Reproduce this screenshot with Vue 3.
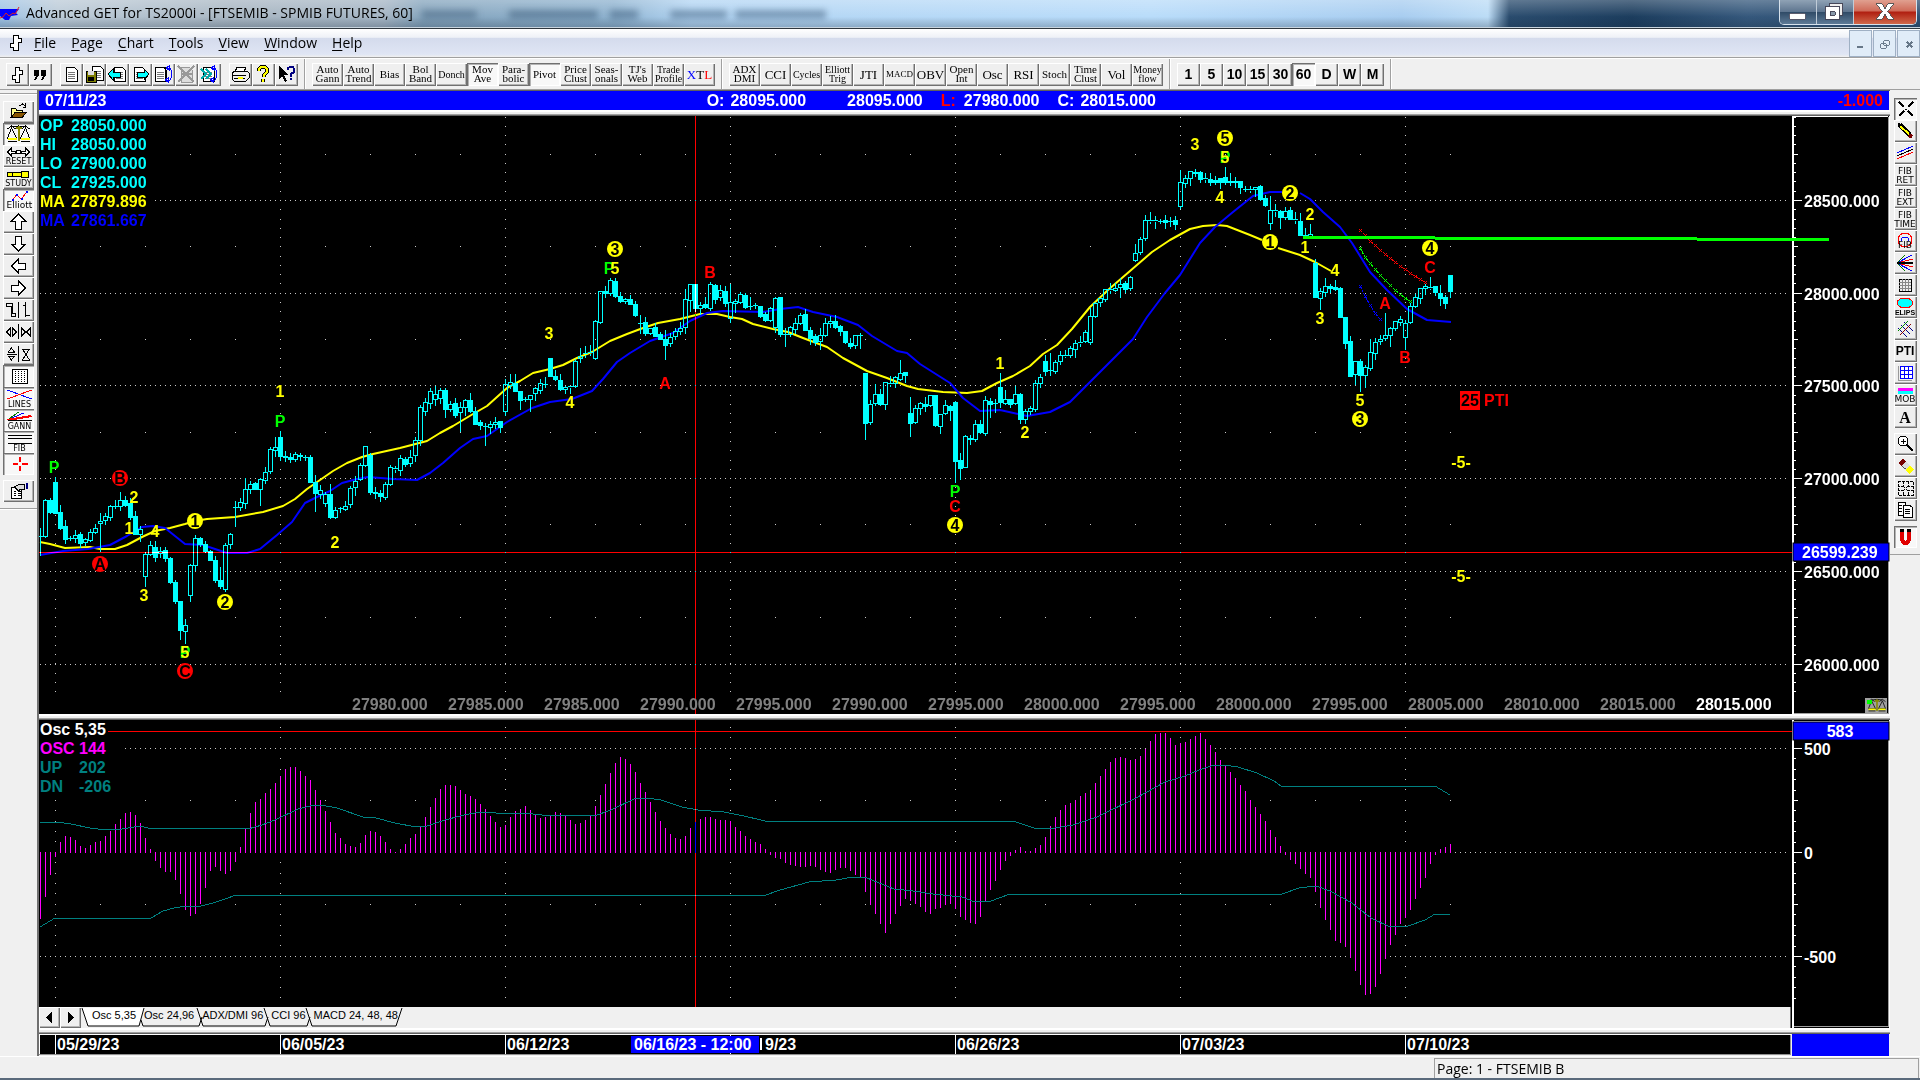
<script setup>
const menus = ['File', 'Page', 'Chart', 'Tools', 'View', 'Window', 'Help']

const barGlyph = '<path d="M9 4h4v3h3v4h-3v8H9v-3H6v-4h3z" fill="#fff" stroke="#000"/>'
const page = (x, y) => `<path d="M${x} ${y}h8l3 3v11h-11z" fill="#fff" stroke="#000"/><path d="M${x + 2} ${y + 5}h7M${x + 2} ${y + 7}h7M${x + 2} ${y + 9}h7M${x + 2} ${y + 11}h7" stroke="#777"/>`
const tools = [
  [
    { t: 'Bar chart', s: barGlyph },
    { t: 'Quotes', s: '<path d="M5 7h5v5l-3 5H5l2-4H5zM12 7h5v5l-3 5h-2l2-4h-2z" fill="#000"/>' }
  ],
  [
    { t: 'New page', s: page(6, 4) },
    { t: 'Save page', s: page(9, 3) + '<path d="M3 8h10v11H3z" fill="#7f7f00" stroke="#000"/><path d="M5 8h6v4H5z" fill="#ddd"/><path d="M5 14h6v4H5z" fill="#000"/>' },
    { t: 'Previous page', s: page(8, 4) + '<path d="M2 11l5-5v3h7v5H7v3z" fill="#0ff" stroke="#000"/>' },
    { t: 'Next page', s: page(5, 4) + '<path d="M20 11l-5-5v3H8v5h7v3z" fill="#0ff" stroke="#000"/>' },
    { t: 'Cycle pages', s: page(3, 4) + '<path d="M6 4h7v14H6" fill="none" stroke="#000"/><path d="M15 5h3l1 2v8l-1 2h-3M13 17l3-2v4zM14 5l3-2v4z" fill="none" stroke="#00f"/>' },
    { t: 'Delete page', s: '<path d="M6 4h8l3 3v12H6z" fill="#ddd" stroke="#999"/><path d="M3 3l16 16M19 3L3 19M6 11h11" stroke="#999" stroke-width="2"/>' },
    { t: 'Link pages', s: page(5, 4) + '<path d="M3 6l5 5-5 5M8 6l5 5-5 5" fill="none" stroke="#0aa" stroke-width="2"/><path d="M14 5h3l1 2v8l-1 2h-3M12 17l3-2v4zM13 5l3-2v4z" fill="none" stroke="#00f"/>' }
  ],
  [
    { t: 'Print', s: '<path d="M8 4h9l-2 5H6z" fill="#fff" stroke="#000"/><path d="M3 10l3-2h12l2 2v5l-3 3H5l-2-2z" fill="#eee" stroke="#000"/><path d="M4 12h13M5 15h11" stroke="#000"/><path d="M9 15h5" stroke="#ff0" stroke-width="2"/>' },
    { t: 'Help', s: '<path d="M7 8V6l2-2h4l2 2v3l-3 3v2M11 16v3" fill="none" stroke="#000" stroke-width="4"/><path d="M7 8V6l2-2h4l2 2v3l-3 3v2M11 16v3" fill="none" stroke="#ff0" stroke-width="2"/>' },
    { t: 'Context help', s: '<path d="M4 3v13l3-3 3 6 2-1-3-6h4z" fill="#000"/><path d="M13 7V5l2-1h3l1 2v3l-3 2v3M16 15v2" fill="none" stroke="#000080" stroke-width="2"/>' }
  ]
]
const studiesA = [
  ['Auto', 'Gann'], ['Auto', 'Trend'], ['Bias'], ['Bol', 'Band'], ['Donch'], ['Mov', 'Ave'], ['Para-', 'bolic'],
  ['Pivot'], ['Price', 'Clust'], ['Seas-', 'onals'], ["TJ's", 'Web'], ['Trade', 'Profile'], ['XTL']
]
const studiesB = [
  ['ADX', 'DMI'], ['CCI'], ['Cycles'], ['Elliott', 'Trig'], ['JTI'], ['MACD'], ['OBV'], ['Open', 'Int'],
  ['Osc'], ['RSI'], ['Stoch'], ['Time', 'Clust'], ['Vol'], ['Money', 'flow']
]
const small = ['Donch', 'Cycles', 'Trade', 'Elliott', 'Money']
const mini = ['MACD']
const big = ['CCI', 'JTI', 'OBV', 'RSI', 'Osc', 'Vol', 'XTL']
const frames = ['1', '5', '10', '15', '30', '60', 'D', 'W', 'M']
const sizeOf = w => ({ small: small.includes(w), mini: mini.includes(w), big: big.includes(w) })

const lab = (s, y = 19, x = 15) => `<text x="${x}" y="${y}" text-anchor="middle" class="cap">${s}</text>`
const scales = '<path d="M4 6l4-3 4 3M18 6l4-3 4 3M8 4l7-1 7 1" fill="none" stroke="#000"/><path d="M15 3v15M12 5h6" stroke="#880" stroke-width="2"/><path d="M8 5l-4 10h9zM22 5l-5 10h9z" fill="none" stroke="#000"/><path d="M4 16h9M17 16h9" stroke="#ff0" stroke-width="2"/><path d="M4 18h9M17 18h9" stroke="#000"/>'
const leftTools = [
  { t: 'Open', s: '<path d="M8 15V7h4l1 2h6v3" fill="#ff8" stroke="#000"/><path d="M8 16l4-5h11l-4 5z" fill="#850" stroke="#000"/><path d="M16 5l3-2 3 2M22 2v4h-3" fill="none" stroke="#000"/>' },
  { t: 'Scales', on: 1, s: scales },
  { t: 'Reset', s: '<path d="M4 7l4-4v3h4v2H8v3zM26 7l-4-4v3h-4v2h4v3z" fill="#fff" stroke="#000"/><circle cx="15" cy="7" r="2" fill="#fff" stroke="#000"/>' + lab('RESET') },
  { t: 'Study', s: '<path d="M4 5h5v4H4zM9 5h9v4H9zM18 4h7v6h-7z" fill="#ff0" stroke="#000"/>' + lab('STUDY', 19) },
  { t: 'Elliott waves', on: 1, s: '<path d="M9 11l4-5 5 4 5-7" fill="none" stroke="#f00"/><path d="M8 10h2v2H8zM12 5h2v2h-2zM17 9h2v2h-2zM22 2h2v2h-2z" fill="#00f"/><text x="16" y="19" text-anchor="middle" class="cap wide">Elliott</text>' },
  { t: 'Up', s: '<path d="M15 3l7 7h-4v8h-6v-8H8z" fill="#fff" stroke="#000"/>' },
  { t: 'Down', s: '<path d="M15 18l7-7h-4V3h-6v8H8z" fill="#fff" stroke="#000"/>' },
  { t: 'Left', s: '<path d="M8 11l7-7v4h7v6h-7v4z" fill="#fff" stroke="#000"/>' },
  { t: 'Right', s: '<path d="M22 11l-7-7v4H8v6h7v4z" fill="#fff" stroke="#000"/>' },
  { t: 'Bar width', s: '<path d="M3 4h6v10h3v3H8V7H3zM15 3v16M19 6h3M22 3v15M22 16h4" fill="none" stroke="#000"/>' },
  { t: 'Horizontal zoom', s: '<path d="M7 7l-4 4 4 4zM9 7l4 4-4 4zM15 3v15M18 7l4 4-4 4zM27 7l-4 4 4 4z" fill="none" stroke="#000"/>' },
  { t: 'Vertical zoom', s: '<path d="M5 9l3-4 3 4zM5 13l3 4 3-4zM3 11h10M15 3v16M19 6h7l-7 11h7l-7-11" fill="none" stroke="#000"/>' },
  { t: 'Grid', on: 1, s: '<path d="M9 4h15v14H9z" fill="#fff" stroke="#000"/><path d="M11 6h12M11 8h12M11 10h12M11 12h12M11 14h12M11 16h12" stroke="#000" stroke-dasharray="1 2"/>' },
  { t: 'Lines', on: 1, s: '<path d="M4 3l24 9" stroke="#00f"/><path d="M4 12l24-9" stroke="#f00"/>' + lab('LINES', 20, 16) },
  { t: 'Gann', on: 1, s: '<path d="M4 11l11-8" stroke="#070"/><path d="M4 11l16-7" stroke="#00f"/><path d="M4 11l24-4" stroke="#f00" stroke-width="2"/><path d="M4 11h24" stroke="#000"/>' + lab('GANN', 20, 16) },
  { t: 'Fibonacci', on: 1, s: '<path d="M4 4h24M4 7h24M4 12h24" stroke="#000"/>' + lab('FIB', 20, 16) },
  { t: 'Crosshair', on: 1, s: '<path d="M9 11h5M18 11h6M16 4v5M16 13v5" stroke="#f00" stroke-width="2"/>' }
]
const propTool = '<path d="M8 7h10v11H8z" fill="#fff" stroke="#000"/><path d="M10 11h2M14 11h3M10 13h2M14 13h3M10 15h2M14 15h3" stroke="#000"/><path d="M11 7l5-3h5v5h-4l-2 2z" fill="#ddd" stroke="#000"/><path d="M23 3v6" stroke="#000080" stroke-width="2"/>'

const px = (s, x, y) => `<text x="${x}" y="${y}" text-anchor="middle" class="cap tall">${s}</text>`
const rightTools = [
  [
    { t: 'Cursor', on: 1, s: '<path d="M5 4l5 5M19 4l-5 5M5 18l5-5M19 18l-5-5" stroke="#000" stroke-width="2"/><path d="M11 11h2" stroke="#000"/>' },
    { t: 'Pencil', s: '<path d="M6 5l10 10" stroke="#000" stroke-width="5"/><path d="M6 6l9 8" stroke="#ff0" stroke-width="2"/><path d="M4 3l4 1-3 4z"/><path d="M15 15l3 2" stroke="#700" stroke-width="4"/>' },
    { t: 'Parallel lines', s: '<path d="M3 11l16-7" stroke="#00f"/><path d="M3 14l16-7" stroke="#000"/><path d="M3 17l16-7" stroke="#f00"/>' },
    { t: 'Fib retracement', s: px('FIB', 11, 10) + px('RET', 11, 19) },
    { t: 'Fib extension', s: px('FIB', 11, 10) + px('EXT', 11, 19) },
    { t: 'Fib time', s: px('FIB', 11, 10) + px('TIME', 11, 19) },
    { t: 'Fib circles', s: '<circle cx="11" cy="10" r="7" fill="none" stroke="#f00"/><path d="M7 11a4 4 0 0 1 8 0" fill="none" stroke="#00f"/>' + px('FIB', 11, 18) },
    { t: 'Gann fan', s: '<path d="M3 11l8-8M3 11l8 8" stroke="#070"/><path d="M3 11l15-8M3 11l15 8" stroke="#00f"/><path d="M3 11l16-4M3 11l16 4" stroke="#f00"/><path d="M3 11h16" stroke="#000" stroke-width="2"/>' },
    { t: 'Gann box', s: '<path d="M5 5h12v12H5z" fill="none" stroke="#000"/><path d="M8 5v12M11 5v12M14 5v12M5 8h12M5 11h12M5 14h12" stroke="#888"/>' },
    { t: 'Ellipse', s: '<ellipse cx="11" cy="7" rx="8" ry="5" fill="#0ff" stroke="#f00"/><text x="11" y="19" text-anchor="middle" class="cap tiny">ELIPS</text>' },
    { t: 'Pitchfork', s: '<path d="M4 10l9 9M7 7l9 9M10 4l9 9" stroke="#008"/><path d="M4 13L14 3" stroke="#080"/><path d="M6 17L17 6" stroke="#800"/>' },
    { t: 'PTI', s: '<text x="11" y="15" text-anchor="middle" class="cap pti">PTI</text>' },
    { t: 'Blue grid', s: '<path d="M6 4h12v12H6zM10 4v12M14 4v12M6 8h12M6 12h12" fill="#fff" stroke="#00f"/><path d="M4 4v14M4 18h14" fill="none" stroke="#999"/>' },
    { t: 'Make or break', s: '<path d="M4 5h15" stroke="#f0f" stroke-width="3"/><path d="M4 8h15" stroke="#0ff" stroke-width="3"/>' + px('MOB', 11, 18) },
    { t: 'Text', s: '<text x="11" y="17" text-anchor="middle" class="cap serif">A</text>' }
  ],
  [
    { t: 'Zoom', s: '<circle cx="9" cy="8" r="5" fill="#fff" stroke="#000"/><path d="M7 8h5M9 6v5" stroke="#000"/><path d="M13 12l6 6" stroke="#000" stroke-width="2"/>' },
    { t: 'Erase', s: '<path d="M7 6l4 4" stroke="#700" stroke-width="7"/><path d="M10 9l4 4" stroke="#ddd" stroke-width="7"/><path d="M11 13l3 3M8 11l3 3" stroke="#555"/><path d="M14 13l4 4" stroke="#ff0" stroke-width="6"/>' },
    { t: 'Tile', s: '<path d="M4 4h15v14H4zM9 4v5H4M14 4v5h5M9 18v-5H4M14 18v-5h5M9 9l5 5M14 9l-5 5" fill="none" stroke="#000" stroke-dasharray="3 1"/>' },
    { t: 'Copy', s: '<path d="M4 3h7v13H4z" fill="#fff" stroke="#000"/><path d="M9 6h6l3 2v10H9z" fill="#fff" stroke="#000"/><path d="M5 6h3M5 9h3M5 12h3M11 10h5M11 12h5M11 14h5" stroke="#000"/>' }
  ],
  [{ t: 'Magnet', on: 1, s: '<path d="M8 5v9l2 3h3l2-3V5" fill="none" stroke="#e00000" stroke-width="4"/><path d="M6 4h4M13 4h4" stroke="#000" stroke-width="3"/>' }]
]

const X0 = 40
const STEP = 5
// high, body top, body bottom, low, filled
const candles = [
  [528,536,536,555],[499,500,536,537],[498,500,512,513,1],[477,482,513,513,1],[505,512,528,529,1],[520,526,539,543,1],[536,538,538,540],[530,535,538,542],[532,534,543,547,1],[538,539,542,545],
  [529,532,540,541],[524,528,532,533],[513,521,523,551],[513,516,520,524],[505,506,517,520],[500,506,506,508],[492,500,506,510],[496,500,505,506,1],[498,503,517,519,1],[511,516,534,534,1],
  [526,529,534,541],[552,554,576,586],[541,545,554,555],[541,547,557,561,1],[547,551,553,557],[547,550,558,561,1],[557,558,582,583,1],[580,582,601,603,1],[601,601,630,639,1],[619,625,631,643],
  [564,565,595,601],[535,538,565,570],[537,538,544,546,1],[541,544,551,552,1],[550,551,560,560,1],[556,560,580,582,1],[567,580,586,588,1],[543,545,589,591],[533,534,544,548],[501,507,507,526],
  [498,502,507,510],[478,489,503,508],[481,484,489,493],[482,483,489,489,1],[478,479,489,505],[467,472,480,483],[447,449,471,473],[437,447,450,456],[431,437,456,460,1],[451,456,457,461,1],
  [453,457,459,462,1],[452,454,459,461],[453,455,456,460,1],[455,457,457,460],[455,457,482,482,1],[475,482,493,511,1],[485,490,494,498],[492,494,503,506],[484,494,517,518,1],[507,510,517,518],
  [507,508,508,512],[501,506,509,510],[486,488,504,507],[476,481,487,495],[463,465,479,480],[446,446,465,466],[453,455,492,494,1],[487,492,493,498,1],[490,493,496,501,1],[482,484,497,499],
  [465,467,484,485],[466,468,469,472],[455,458,470,475],[457,459,464,466,1],[450,457,463,466],[437,440,455,461],[405,407,440,445],[398,402,411,415],[388,391,403,408],[386,394,399,405],
  [388,390,398,403],[388,390,409,417,1],[401,404,409,411],[398,403,415,417,1],[402,407,412,431],[399,400,407,415],[393,400,411,412,1],[407,411,424,424,1],[420,422,425,429,1],[423,426,426,445],
  [421,424,427,433],[417,422,424,428],[421,421,427,432,1],[379,384,411,415],[374,382,385,388],[374,383,391,391,1],[391,391,400,409,1],[397,399,399,401],[395,395,399,411],[387,388,393,400],
  [379,383,390,393],[377,384,384,387],[358,358,376,376,1],[370,376,379,380,1],[374,380,389,390,1],[386,387,389,393],[386,386,387,393],[359,361,386,387],[348,356,358,362],[346,353,354,357],
  [345,352,353,355],[320,321,358,359],[291,291,322,323],[286,291,293,297,1],[278,280,293,295],[278,281,296,297,1],[292,296,301,302,1],[298,299,301,303],[295,299,304,304,1],[301,304,315,316,1],
  [315,323,323,333],[317,322,333,335,1],[328,328,333,334],[323,327,336,336,1],[332,334,339,339,1],[330,339,345,359,1],[333,337,343,346],[328,331,336,339],[322,328,331,334],[289,299,327,333],
  [284,284,300,311],[284,284,308,311,1],[302,305,308,314],[297,304,307,308,1],[282,284,308,310],[284,285,299,303,1],[285,290,297,300],[286,291,303,306,1],[284,302,318,322],[299,301,303,312],
  [292,294,302,303],[293,295,307,308,1],[297,306,306,309],[303,305,305,308],[306,306,316,317,1],[312,314,320,321,1],[307,308,320,321],[297,298,327,332],[297,297,334,336,1],[328,334,334,346],
  [326,327,334,336],[318,323,329,333],[313,315,323,324],[309,314,330,330,1],[327,330,338,344,1],[334,336,342,345,1],[328,335,341,349],[318,323,335,336],[316,321,323,327],[315,321,327,328,1],
  [325,326,331,335,1],[331,331,342,343,1],[338,343,346,348,1],[335,335,345,348],[333,335,335,348],[373,373,423,439,1],[400,404,422,424],[384,394,403,405],[389,394,404,405,1],[382,382,404,409],
  [376,383,384,386],[376,377,383,387],[360,373,379,380],[372,372,375,382,1],[397,413,423,436,1],[405,408,422,423],[402,403,408,414],[397,404,406,411,1],[395,395,405,406],[395,395,425,426,1],
  [414,414,426,433],[400,405,413,414],[405,406,410,420,1],[401,402,461,482,1],[453,460,468,479,1],[435,436,467,467],[435,438,439,444,1],[420,424,439,441],[420,424,432,433,1],[396,400,433,435],
  [398,401,404,417,1],[399,403,403,412],[373,387,402,407,1],[390,399,403,404],[399,399,404,407,1],[386,394,403,404],[393,394,419,423,1],[409,411,419,423],[406,408,411,414],[380,383,409,411],
  [374,377,383,387],[355,361,371,375,1],[353,370,370,375],[360,362,371,373],[351,355,361,364],[350,355,356,357],[346,348,355,357],[340,343,349,357],[336,342,343,346],[330,332,341,342],
  [308,316,342,344],[302,303,316,317],[298,298,302,306],[289,289,299,301],[283,289,290,293],[283,288,290,291],[278,284,287,297],[281,283,289,292,1],[276,277,288,290],[244,253,260,261],
  [237,239,252,254],[215,220,238,240],[212,220,221,223],[216,220,221,228],[219,221,221,223],[215,220,222,228,1],[217,221,221,226],[216,220,224,229,1],[170,182,206,208],[175,178,183,187],
  [171,171,178,185],[169,172,173,176,1],[171,172,179,182,1],[173,178,179,182],[173,179,182,185,1],[176,180,182,184,1],[178,178,182,188,1],[167,177,182,184,1],[173,181,182,185,1],[177,181,182,187,1],
  [181,181,187,193,1],[186,189,189,191],[186,189,190,192],[187,187,189,196],[185,186,199,200,1],[195,198,205,206,1],[196,210,223,229],[204,210,211,216],[210,211,217,228,1],[207,211,217,219],
  [207,210,219,219,1],[212,219,220,223],[213,221,235,235,1],[228,235,236,237],[224,234,236,237],[259,263,297,297,1],[288,291,298,309],[278,286,292,296],[284,286,288,292,1],[280,287,289,290,1],
  [287,288,317,317,1],[317,317,343,348,1],[336,341,376,376,1],[361,361,374,384],[359,361,375,391,1],[365,367,375,387],[339,352,368,370],[338,342,353,359],[335,339,341,344],[313,335,338,340],
  [327,328,335,346],[321,321,328,330],[316,319,322,325],[320,323,337,349],[303,306,322,323],[294,297,306,307],[288,288,298,303],[284,286,288,294],[277,287,288,289],[286,286,292,295,1],
  [285,293,298,305,1],[295,297,303,308,1],[275,275,291,297,1]
]
let outline = ''
let solid = ''
candles.forEach(([h, t, b, l, f], i) => {
  const x = X0 + i * STEP
  outline += `M${x + 0.5} ${h}V${t}M${x + 0.5} ${b + 1}V${l + 1}`
  if (f) solid += `M${x - 2} ${t}h5V${b + 1}h-5z`
  else if (b - t < 2) outline += `M${x - 2} ${t + 0.5}h5`
  else outline += `M${x - 1.5} ${t + 0.5}h4V${b + 0.5}h-4z`
})

const osc = [
  918,896,874,856,842,836,837,840,846,848,845,842,841,836,831,824,819,813,812,815,823,838,849,860,867,871,871,879,893,909,
  915,913,903,887,870,866,870,873,870,861,847,829,813,802,799,793,789,783,776,769,767,767,771,776,780,790,800,811,822,833,
  838,844,846,847,843,835,831,832,836,842,849,852,849,844,838,834,826,817,807,798,789,785,785,786,790,794,796,799,804,809,
  816,822,827,825,817,811,809,806,810,814,818,817,815,812,813,816,820,824,823,820,816,806,795,784,773,763,757,759,764,772,
  783,792,802,812,821,828,834,838,839,836,828,822,819,817,817,819,820,820,821,827,831,836,839,842,844,849,854,857,858,862,
  864,865,866,866,865,866,869,871,872,869,867,867,870,874,877,891,904,913,923,932,923,913,905,898,900,903,906,911,913,908,
  907,904,903,908,916,919,922,923,916,901,889,880,869,860,855,850,847,851,851,848,845,837,826,817,810,805,803,800,796,793,
  790,783,776,769,762,758,757,758,760,759,756,749,741,734,733,733,738,745,743,742,739,736,733,739,745,752,760,766,772,778,
  785,791,800,807,814,821,830,837,846,854,859,863,868,873,877,891,907,919,929,940,942,946,957,970,984,994,993,986,973,958,
  944,934,923,917,909,898,887,877,863,854,849,847,844
]
const oscPath = osc.map((y, i) => {
  const x = X0 + i * STEP + 0.5
  return y < 852 ? `M${x} ${y}V853` : `M${x} 852V${y + 1}`
}).join('')

const yellowMa = ['40,542 50,544 65,548 90,547 100,549 115,549 127,545 142,537 155,531 170,528 185,524 195,521 207,519 235,517 263,512 283,506 295,499 307,489 320,480 333,471 347,463 362,457 373,454 400,448 427,441 440,433 453,426 473,414 487,406 507,388 520,381 533,373 550,369 563,365 577,358 592,352 610,341 627,334 643,328 658,323 680,319 700,314 717,314 730,317 742,319 753,324 773,329 788,332 803,338 827,347 843,358 867,371 887,378 907,386 918,389 943,392 967,393 982,391 997,383 1013,376 1030,366 1043,354 1057,345 1072,329 1090,307 1108,290 1130,271 1152,252 1170,240 1190,229 1203,226 1217,225 1227,226 1250,235 1262,240', '1278,248 1300,255 1315,262 1331,271']
const blueMa = ['40,555 63,551 88,549 110,545 127,536 142,527 153,526 165,528 185,544 203,545 227,553 247,553 260,549 277,535 292,522 305,503 317,497 330,491 342,483 357,479 368,477 393,479 417,480 430,473 443,463 460,448 473,439 487,436 507,422 532,408 550,402 572,399 592,391 603,379 617,362 630,353 650,341 673,333 690,321 707,313 723,311 763,312 780,309 798,307 813,312 837,317 858,325 872,336 897,351 907,353 920,364 950,383 963,398 980,411 1000,410 1027,416 1050,412 1070,402 1090,382 1110,362 1133,339 1147,317 1165,293 1180,275 1200,243 1215,227 1233,212 1253,196 1270,192 1282,192', '1300,193 1310,199 1323,212 1340,227 1352,243 1370,272 1387,290 1407,309 1427,320 1451,322']
const upBand = '40,822 57,822 71,824 90,828 106,830 122,829 140,826 148,828 237,828 248,829 262,825 275,820 298,809 310,806 321,805 337,808 363,817 376,818 395,823 416,827 427,826 445,820 464,815 480,812 496,813 510,814 523,813 542,815 569,815 576,816 597,815 611,810 634,799 647,798 661,800 682,807 698,810 724,812 744,816 765,821 1013,821 1034,828 1049,829 1073,825 1097,817 1136,798 1165,782 1185,776 1199,770 1211,766 1223,765 1238,767 1257,773 1274,781 1281,786 1435,786 1450,795'
const dnBand = '40,927 55,918 151,918 163,911 174,908 186,906 197,907 213,903 225,899 236,895 766,895 780,890 809,882 836,880 853,877 867,878 894,889 913,891 933,894 962,897 975,902 991,901 1010,894 1282,894 1299,888 1316,886 1330,891 1352,903 1371,918 1388,926 1408,926 1425,920 1435,914 1450,914'

const projections = [
  { c: '#f00', y: [230,235,241,245,250,254,258,262,266,269,273,276,279,282] },
  { c: '#0f0', y: [248,257,263,269,275,280,285,290,294,298,301] },
  { c: '#00f', y: [286,296,305,313,319] }
].map(p => ({
  c: p.c,
  line: p.y.map((y, i) => `${1360 + i * 5},${y}`).join(' '),
  marks: p.y.map((y, i) => `M${1359 + i * 5} ${y - 1}l3 3m0-3l-3 3`).join('')
}))

const mondays = [55, 280, 505, 730, 955, 1180, 1405]
const dot = (x, y) => `M${x} ${Math.round(y) + 0.5}h1`
const priceY = n => 200 + n * 92.7
let priceDots = ''
for (let n = 0; n < 6; n++) {
  for (let x = n ? 40 : 155; x < 1790; x += 5) priceDots += dot(x, priceY(n))
}
for (let n = -0.5; n < 5; n++) {
  for (let x = n < 0 ? 190 : 55; x <= 1450; x += 45) priceDots += dot(x, priceY(n))
}
for (const x of mondays) {
  for (let y = 200 - 9 * 9.27; y < 692; y += 9.27) if (x > 55 || y > 230) priceDots += dot(x, y)
}
let oscDots = ''
for (let x = 125; x < 1790; x += 5) oscDots += dot(x, 748)
for (let x = 1455; x < 1790; x += 5) oscDots += dot(x, 852)
for (let x = 40; x < 1790; x += 5) oscDots += dot(x, 956)
for (let x = 145; x <= 1450; x += 45) oscDots += dot(x, 800)
for (let x = 100; x <= 1450; x += 45) oscDots += dot(x, 904)
for (const x of mondays) {
  for (let y = 727; y < 1000; y += 10.4) if (x > 55 || y > 795) oscDots += dot(x, y)
}
let priceTicks = ''
for (let k = -9; k <= 53; k++) {
  const len = k % 10 === 0 ? 8 : k % 5 === 0 ? 4 : 2
  priceTicks += `M1794 ${Math.round(200 + k * 9.27) + 0.5}h${len}`
}
let oscTicks = ''
for (let k = -2; k <= 24; k++) {
  const len = k % 10 === 0 ? 8 : k % 5 === 0 ? 4 : 2
  oscTicks += `M1794 ${Math.round(748 + k * 10.4) + 0.5}h${len}`
}
const priceLabels = ['28500.000', '28000.000', '27500.000', '27000.000', '26500.000', '26000.000']
const readout = [
  ['OP', '28050.000', '#0ff'], ['HI', '28050.000', '#0ff'], ['LO', '27900.000', '#0ff'],
  ['CL', '27925.000', '#0ff'], ['MA', '27879.896', '#ff0'], ['MA', '27861.667', '#00f']
]
const oscReadout = [['OSC', '144', '#f0f'], ['UP', '202', '#008080'], ['DN', '-206', '#008080']]
const tape = ['27980', '27985', '27985', '27990', '27995', '27990', '27995', '28000', '27995', '28000', '27995', '28005', '28010', '28015', '28015']
const waves = [
  ['P', 54, 473, 'g'], ['2', 134, 503, 'y'], ['1', 129, 534, 'y'], ['4', 155, 537, 'y'], ['3', 144, 601, 'y'],
  ['P', 185, 658, 'g'], ['5', 185, 658, 'y'], ['1', 280, 397, 'y'], ['P', 280, 427, 'g'], ['2', 335, 548, 'y'],
  ['3', 549, 339, 'y'], ['4', 570, 408, 'y'], ['P', 609, 274, 'g'], ['5', 615, 274, 'y'], ['B', 710, 278, 'r'],
  ['A', 665, 389, 'r'], ['P', 955, 497, 'g'], ['C', 955, 512, 'r'], ['1', 1000, 369, 'y'], ['2', 1025, 438, 'y'],
  ['3', 1195, 150, 'y'], ['P', 1225, 163, 'g'], ['5', 1225, 163, 'y'], ['4', 1220, 203, 'y'], ['2', 1310, 220, 'y'],
  ['1', 1305, 253, 'y'], ['4', 1335, 276, 'y'], ['C', 1430, 273, 'r'], ['A', 1385, 309, 'r'], ['B', 1405, 363, 'r'],
  ['3', 1320, 324, 'y'], ['5', 1360, 406, 'y'], ['-5-', 1461, 468, 'y'], ['-5-', 1461, 582, 'y']
]
const circled = [
  ['B', 120, 478, 'r'], ['A', 100, 564, 'r'], ['1', 195, 521, 'y'], ['2', 225, 602, 'y'], ['C', 185, 671, 'r'],
  ['3', 615, 249, 'y'], ['4', 955, 525, 'y'], ['5', 1225, 138, 'y'], ['2', 1290, 193, 'y'], ['1', 1270, 242, 'y'],
  ['4', 1430, 248, 'y'], ['3', 1360, 419, 'y']
]
const tabs = ['Osc 5,35', 'Osc 24,96', 'ADX/DMI 96', 'CCI 96', 'MACD 24, 48, 48']
// the cursor date covers the start of the fourth label
const dates = [
  ['05/29/23', 57], ['06/05/23', 282], ['06/12/23', 507], ['9/23', 765],
  ['06/26/23', 957], ['07/03/23', 1182], ['07/10/23', 1407]
]
</script>

<template>
  <div class="app">
    <header class="title">
      <span class="ghost"></span>
      <svg class="logo" viewBox="0 0 20 16"><path d="M0 3h19l-3 4 2 2-7 1-2 4H5l-5-4z" fill="#00f" /><path d="M0 12l3-1 3-4 3 3 4-3 2 1 4-7" fill="none" stroke="#e02020" /></svg>
      <h1>Advanced GET for TS2000i - [FTSEMIB - SPMIB FUTURES, 60]</h1>
      <div class="winbtns">
        <button aria-label="Minimize"><svg viewBox="0 0 38 25"><rect x="10" y="14" width="17" height="6" rx="1" fill="#fff" stroke="#556" /></svg></button>
        <button aria-label="Restore"><svg viewBox="0 0 36 25"><path d="M12 4h14v12H12z" fill="#eee" stroke="#445" /><path d="M8 7h15v13H8z" fill="#fff" stroke="#445" /><path d="M13 12h5v4h-5z" fill="#89a" stroke="#445" /></svg></button>
        <button class="close" aria-label="Close"><svg viewBox="0 0 64 25"><path d="M23 4h6l3 5 3-5h6l-6 8 6 8h-6l-3-5-3 5h-6l6-8z" fill="#fff" stroke="#555" /></svg></button>
      </div>
    </header>

    <nav class="menu">
      <svg class="mglyph" viewBox="0 0 22 23" v-html="barGlyph"></svg>
      <a v-for="m in menus" :key="m" href="#"><u>{{ m[0] }}</u>{{ m.slice(1) }}</a>
      <div class="mdi">
        <button aria-label="Minimize chart"><svg viewBox="0 0 22 26"><path d="M7 17h7" stroke="#678" stroke-width="2" /></svg></button>
        <button aria-label="Restore chart"><svg viewBox="0 0 22 26"><path d="M10 10h6v5h-6zM7 13h6v5H7z" fill="#e4eef8" stroke="#678" stroke-width="1" /></svg></button>
        <button aria-label="Close chart"><svg viewBox="0 0 22 26"><path d="M9 11l6 6M15 11l-6 6" stroke="#678" stroke-width="2" /></svg></button>
      </div>
    </nav>

    <div class="toolbar">
      <div v-for="(g, n) in tools" :key="n" class="group">
        <button v-for="b in g" :key="b.t" class="btn sq" :title="b.t" :aria-label="b.t"><svg viewBox="0 0 23 23" v-html="b.s"></svg></button>
      </div>
      <i class="sep"></i>
      <div class="group">
        <button v-for="s in studiesA" :key="s.join()" class="btn study" :class="[{ on: s[0] === 'Mov' || s[0] === 'Pivot' }, sizeOf(s[0])]">
          <template v-if="s[0] === 'XTL'"><span><b class="bl">X</b>T<b class="rd">L</b></span></template>
          <template v-else><span v-for="w in s" :key="w">{{ w }}</span></template>
        </button>
      </div>
      <i class="sep"></i>
      <div class="group">
        <button v-for="s in studiesB" :key="s.join()" class="btn study" :class="sizeOf(s[0])"><span v-for="w in s" :key="w">{{ w }}</span></button>
      </div>
      <i class="sep"></i>
      <div class="group">
        <button v-for="f in frames" :key="f" class="btn sq frame" :class="{ on: f === '60' }">{{ f }}</button>
      </div>
      <i class="sep"></i>
    </div>

    <main class="work">
      <aside class="left">
        <div class="lbox">
          <button v-for="b in leftTools" :key="b.t" class="btn lt" :class="{ on: b.on }" :title="b.t" :aria-label="b.t"><svg viewBox="0 0 30 22" v-html="b.s"></svg></button>
          <button class="btn lt prop" title="Properties" aria-label="Properties"><svg viewBox="0 0 30 22" v-html="propTool"></svg></button>
        </div>
      </aside>

      <section class="center">
        <div class="quote">
          <span class="day">07/11/23</span>
          <span>O:</span><span class="v">28095.000</span>
          <span class="wide-gap">28095.000</span>
          <span class="k red">L:</span><span class="v3">27980.000</span>
          <span class="k">C:</span><span class="v">28015.000</span>
          <span class="chg">-1.000</span>
        </div>
        <div class="split"></div>

        <svg class="pane" viewBox="39 116 1851 598" role="img" aria-label="Price chart">
          <rect x="39" y="116" width="1850" height="598" />
          <g class="crisp">
            <path :d="priceDots" class="dots" />
            <path d="M1792 116h2v598h-2z" fill="#fff" />
            <path d="M1794 116.5h94" stroke="#fff" />
            <path d="M1794 713.5h94M1888.5 117v597" stroke="#a0a0a0" />
            <path d="M1889 116h1v598h-1z" fill="#fff" />
            <path :d="priceTicks" stroke="#fff" />
          </g>
          <polyline v-for="p in yellowMa" :key="p" :points="p" class="ma" stroke="#ff0" />
          <polyline v-for="p in blueMa" :key="p" :points="p" class="ma" stroke="#00f" />
          <g class="crisp">
            <path :d="outline" fill="none" stroke="#0ff" />
            <path :d="solid" fill="#0ff" />
            <g v-for="p in projections" :key="p.c" :stroke="p.c" fill="none">
              <polyline :points="p.line" stroke-dasharray="3 1" /><path :d="p.marks" />
            </g>
            <path d="M1303 236h132v1h262v1h132v3h-132v-1h-262v-1h-132z" fill="#0f0" />
          </g>
          <g class="t">
            <g v-for="(r, i) in readout" :key="i" :fill="r[2]">
              <text x="40" :y="131 + i * 19">{{ r[0] }}</text><text x="71" :y="131 + i * 19">{{ r[1] }}</text>
            </g>
            <text v-for="(p, i) in priceLabels" :key="p" x="1804" :y="Math.round(priceY(i)) + 7" fill="#fff">{{ p }}</text>
            <text v-for="(p, i) in tape" :key="i" :x="352 + i * 96" y="710" :fill="i === 14 ? '#fff' : '#808080'">{{ p }}.000</text>
            <text v-for="w in waves" :key="w.join()" :x="w[1]" :y="w[2]" :class="w[3]" text-anchor="middle">{{ w[0] }}</text>
            <g v-for="w in circled" :key="w.join()">
              <circle :cx="w[1]" :cy="w[2]" r="8" :class="w[3]" /><text :x="w[1]" :y="w[2] + 6" text-anchor="middle">{{ w[0] }}</text>
            </g>
            <rect x="1460" y="391" width="20" height="19" class="r" />
            <text x="1461" y="406">25</text><text x="1484" y="406" class="r">PTI</text>
            <rect x="1793" y="543" width="96" height="18" fill="#00f" stroke="#000" /><text x="1802" y="558" fill="#fff">26599.239</text>
          </g>
          <g class="crisp cross"><path d="M695.5 116v598M39 552.5h1753" /></g>
          <rect x="1865" y="698" width="22" height="15" fill="#a0a0a0" />
          <svg x="1865" y="697" width="24" height="17" viewBox="0 0 30 22" v-html="scales"></svg>
          <rect x="1867" y="700" width="5" height="4" fill="#0f0" />
        </svg>
        <div class="split"></div>

        <div class="lower">
          <div class="lplot">
            <svg class="pane" viewBox="39 720 1753 287" role="img" aria-label="Oscillator chart">
              <rect x="39" y="720" width="1753" height="287" />
              <g class="crisp">
                <path :d="oscDots" class="dots" />
                <path :d="oscPath" stroke="#f0f" />
                <polyline :points="upBand" class="band" /><polyline :points="dnBand" class="band" />
              </g>
              <g class="t">
                <text x="40" y="735" fill="#fff">Osc 5,35</text>
                <g v-for="(r, i) in oscReadout" :key="r[0]" :fill="r[2]">
                  <text x="40" :y="754 + i * 19">{{ r[0] }}</text><text x="79" :y="754 + i * 19">{{ r[1] }}</text>
                </g>
              </g>
              <g class="crisp cross"><path d="M695.5 720v287M108 731.5h1684" /></g>
            </svg>
            <div class="tabs">
              <svg class="tabline" viewBox="0 0 400 21" aria-hidden="true">
                <path d="M43 1l6 18h51l5-18z" fill="#fff" />
                <path d="M43 1l6 18h51l5-18M102 13l2 6h56l3-9M158 1l6 18h62l3-9M225 1l6 18h37l3-9M267 1l6 18h84l6-18" fill="none" stroke="#000" />
              </svg>
              <button class="btn nav" aria-label="Scroll left"><svg viewBox="0 0 20 20"><path d="M12 5v10l-5-5z" /></svg></button>
              <button class="btn nav" aria-label="Scroll right"><svg viewBox="0 0 20 20"><path d="M8 5v10l5-5z" /></svg></button>
              <div class="tablist"><button v-for="t in tabs" :key="t">{{ t }}</button></div>
            </div>
          </div>
          <svg class="laxis" viewBox="1792 720 98 308" preserveAspectRatio="xMinYMin meet">
            <rect x="1792" y="720" width="98" height="308" />
            <g class="crisp">
              <path d="M1792 720h2v308h-2zM1889 720h1v308h-1z" fill="#fff" />
              <path d="M1794 721.5h94" stroke="#fff" />
              <path d="M1794 1026.5h94M1888.5 721v306" stroke="#a0a0a0" />
              <path :d="oscTicks" stroke="#fff" />
            </g>
            <g class="t" fill="#fff">
              <text x="1804" y="755">500</text><text x="1804" y="859">0</text><text x="1804" y="963">-500</text>
              <rect x="1793" y="722" width="96" height="18" fill="#00f" stroke="#000" /><text x="1840" y="737" text-anchor="middle">583</text>
            </g>
          </svg>
        </div>
        <div class="split"></div>

        <svg class="pane" viewBox="39 1034 1851 22" role="img" aria-label="Date axis">
          <rect x="39" y="1034" width="1851" height="22" fill="#f0f0f0" />
          <g class="crisp">
            <rect x="39" y="1034" width="1752" height="20" />
            <path d="M39 1034.5h1752M39.5 1034v20" stroke="#fff" />
            <path d="M39 1054.5h1752M1790.5 1035v19" stroke="#909090" />
            <path v-for="x in mondays" :key="x" :d="`M${x + 0.5} 1034v20`" stroke="#fff" />
            <rect x="1792" y="1034" width="97" height="22" fill="#00f" />
            <path d="M760 1038h2v12h-2z" fill="#fff" />
            <rect x="631" y="1036" width="128" height="17" fill="#00f" />
          </g>
          <g class="t" fill="#fff">
            <text v-for="d in dates" :key="d[0]" :x="d[1]" y="1050">{{ d[0] }}</text>
            <text x="634" y="1050">06/16/23 - 12:00</text>
          </g>
        </svg>
      </section>

      <aside class="right">
        <div class="rbox">
          <div v-for="(g, n) in rightTools" :key="n" class="rgroup">
            <button v-for="b in g" :key="b.t" class="btn rt" :class="{ on: b.on }" :title="b.t" :aria-label="b.t"><svg viewBox="0 0 23 22" v-html="b.s"></svg></button>
          </div>
        </div>
      </aside>
    </main>

    <footer class="status"><span>Page: 1 - FTSEMIB B</span></footer>
  </div>
</template>

<style>
body { margin: 0; background: #f0f0f0; }
.cap { font: 8px "DejaVu Sans", sans-serif; fill: #000; }
.cap.wide { font-size: 9px; }
.cap.tall { font: 9px "DejaVu Sans", sans-serif; }
.cap.tiny { font: bold 7px "Liberation Sans", sans-serif; }
.cap.pti { font: bold 12px "Liberation Sans", sans-serif; }
.cap.serif { font: bold 16px "Liberation Serif", serif; }
</style>

<style scoped>
.app { width: 100%; background: #f0f0f0; font-family: "Liberation Sans", Arial, sans-serif; color: #000; overflow: hidden; }
button { border: 0; margin: 0; padding: 0; color: #000; background: none; font-family: inherit; }
button svg, .pane, .laxis { display: block; }
button svg { width: 100%; height: 100%; shape-rendering: crispEdges; }

.title {
  position: relative; box-sizing: border-box; height: 29px; display: flex; align-items: center; overflow: hidden;
  border-bottom: 1px solid #30383f;
  background:
    linear-gradient(180deg, rgba(255,255,255,.25), rgba(255,255,255,0) 60%, rgba(20,40,60,.25) 96%, #c8d4de 97%),
    linear-gradient(90deg, #9fc4e6 0, #bccbd8 3%, #a9b7c3 12%, #a5b5c4 20%, #86a5bd 22%, #8fb3d0 32%, #b3d5f3 36%, #b9dcfa 60%, #a8cdf0 73%, #bcdcf6 77.5%, #2a4c6e 78.6%, #1c3d5e 85%, #35587c 91%, #2f5072 100%);
}
.ghost {
  position: absolute; left: 22%; width: 21%; top: 10px; height: 9px; filter: blur(3px);
  background: linear-gradient(90deg, rgba(50,80,110,.4) 0 13%, transparent 14% 21%, rgba(50,80,110,.45) 22% 43%, transparent 44% 46%, rgba(50,80,110,.45) 47% 53%, transparent 54% 61%, rgba(50,80,110,.45) 62% 75%, transparent 76% 77%, rgba(50,80,110,.45) 78% 100%);
}
.logo { width: 20px; height: 16px; margin-right: 6px; position: relative; }
h1 { margin: 0 0 2px; font: 14px/20px "Open Sans", "Noto Sans", sans-serif; flex: 1; white-space: nowrap; position: relative; }
.winbtns { align-self: flex-start; display: flex; height: 24px; margin-right: 3px; border: 1px solid #d6e2ec; border-top: 0; border-radius: 0 0 5px 5px; overflow: hidden; position: relative; }
.winbtns button { width: 37px; border-right: 1px solid #c0ccd8; background: linear-gradient(#8fa2b5, #5f7690 48%, #2f4a66 50%, #5d7a96); }
.winbtns .close { width: 62px; border: 0; background: linear-gradient(#e0a090, #cf6a58 46%, #b01e10 50%, #d0684a); }

.menu { height: 28px; display: flex; align-items: center; gap: 15px; border-bottom: 1px solid #a0a0a0; background: linear-gradient(#fff 0, #eef1f7 30%, #d4dbec 32%, #dfe5f4 90%, #f0f0f0 100%); font: 14px/20px "Open Sans", "Noto Sans", sans-serif; }
.menu a { color: #000; text-decoration: none; }
.menu u { text-underline-offset: 2px; }
.mglyph { width: 24px; height: 24px; margin: 0 -9px 0 4px; shape-rendering: crispEdges; }
.mdi { display: flex; gap: 1px; margin-left: auto; align-self: stretch; padding-top: 1px; }
.mdi button { width: 23px; box-sizing: border-box; border: 1px solid #9fb0c4; background: #e0ecf8; }

.toolbar { box-sizing: border-box; height: 32px; display: flex; align-items: center; padding: 0 0 0 6px; border-top: 1px solid #fff; border-bottom: 1px solid #a0a0a0; }
.group { display: flex; }
.group + .group { margin-left: 8px; }
.sep { width: 1px; align-self: stretch; background: #a0a0a0; box-shadow: 1px 0 #fff; margin: 0 7px 0 6px; }
.btn { box-sizing: border-box; flex: none; background: #efefef; box-shadow: inset 1px 1px #fff, inset -1px -1px #707070, inset -2px -2px #b4b4b4; }
.btn.on { background: #f8f8f8; box-shadow: inset 1px 1px #707070, inset 2px 2px #b4b4b4, inset -1px -1px #fff; }
.sq { width: 23px; height: 23px; }
.study { width: 31px; height: 23px; display: flex; flex-direction: column; align-items: center; justify-content: center; font: 11px/9px "Liberation Serif", serif; white-space: nowrap; }
.study.small { font-size: 10px; }
.study.mini { font-size: 9px; }
.study.big { font-size: 13px; }
.study b { font-weight: 400; }
.bl { color: #00f; }
.rd { color: #f00; }
.frame { font: bold 14px/23px "Liberation Sans", sans-serif; }

.work { display: flex; align-items: stretch; }
.left { width: 37px; flex: none; border-right: 2px solid #707070; box-sizing: content-box; }
.lbox { margin-top: 3px; padding: 7px 0 6px 3px; border-top: 1px solid #a0a0a0; border-bottom: 1px solid #a0a0a0; box-shadow: inset 0 1px #fff, 0 1px #fff; display: flex; flex-direction: column; }
.lt { width: 31px; height: 22px; }
.prop { margin-top: 5px; }
.right { width: 30px; flex: none; }
.rbox { padding: 8px 0 6px 4px; border-bottom: 1px solid #a0a0a0; display: flex; flex-direction: column; gap: 5px; }
.rgroup { display: flex; flex-direction: column; }
.rt { width: 23px; height: 22px; }

.center { flex: 1; min-width: 0; border-top: 1px solid #606060; }
.quote { height: 19px; margin-right: 1px; padding: 0 6px; display: flex; background: #00f; color: #fff; font: bold 16px/19px "Liberation Sans", sans-serif; white-space: nowrap; }
.day { width: 36%; }
.v { margin-left: 6px; }
.v3 { margin-left: 8px; }
.k { margin-left: 18px; }
.wide-gap { margin-left: 41px; }
.red { color: #f00; }
.chg { margin-left: auto; color: #f00; }
.split { height: 6px; background: linear-gradient(#fff 0 2px, #f0f0f0 2px 4px, #a0a0a0 4px 5px, #606060 5px 6px); }

.pane { width: 100%; height: auto; }
.lower { display: flex; }
.lplot { flex: 1; min-width: 0; background: #000; }
.laxis { width: 98px; flex: none; }
.crisp { shape-rendering: crispEdges; }
.dots { stroke: #c8c8c8; }
.ma { fill: none; stroke-width: 2; stroke-linejoin: round; }
.band { fill: none; stroke: #008080; }
.cross { mix-blend-mode: difference; }
.cross path { stroke: #f00; }
.t { font: bold 16px "Liberation Sans", Arial, sans-serif; }
.y { fill: #ff0; }
.g { fill: #0f0; }
.r { fill: #f00; }

.tabs { position: relative; height: 21px; margin-right: 1px; border-right: 1px solid #707070; background: #f0f0f0; display: flex; }
.tabline { position: absolute; left: 0; top: 0; width: 400px; height: 21px; }
.nav { position: relative; width: 21px; height: 21px; }
.tablist { position: relative; display: flex; gap: 8px; padding-left: 11px; }
.tablist button { font: 11px/16px "Liberation Sans", sans-serif; white-space: nowrap; height: 16px; }

.status { box-sizing: border-box; height: 24px; border-top: 1px solid #fff; border-bottom: 2px solid #5a6a7c; padding-top: 1px; display: flex; justify-content: flex-end; }
.status span { box-sizing: border-box; width: 485px; margin-right: 1px; padding-left: 2px; border: 1px solid #a0a0a0; border-bottom: 0; font: 14px/19px "Open Sans", "Noto Sans", sans-serif; }
</style>
